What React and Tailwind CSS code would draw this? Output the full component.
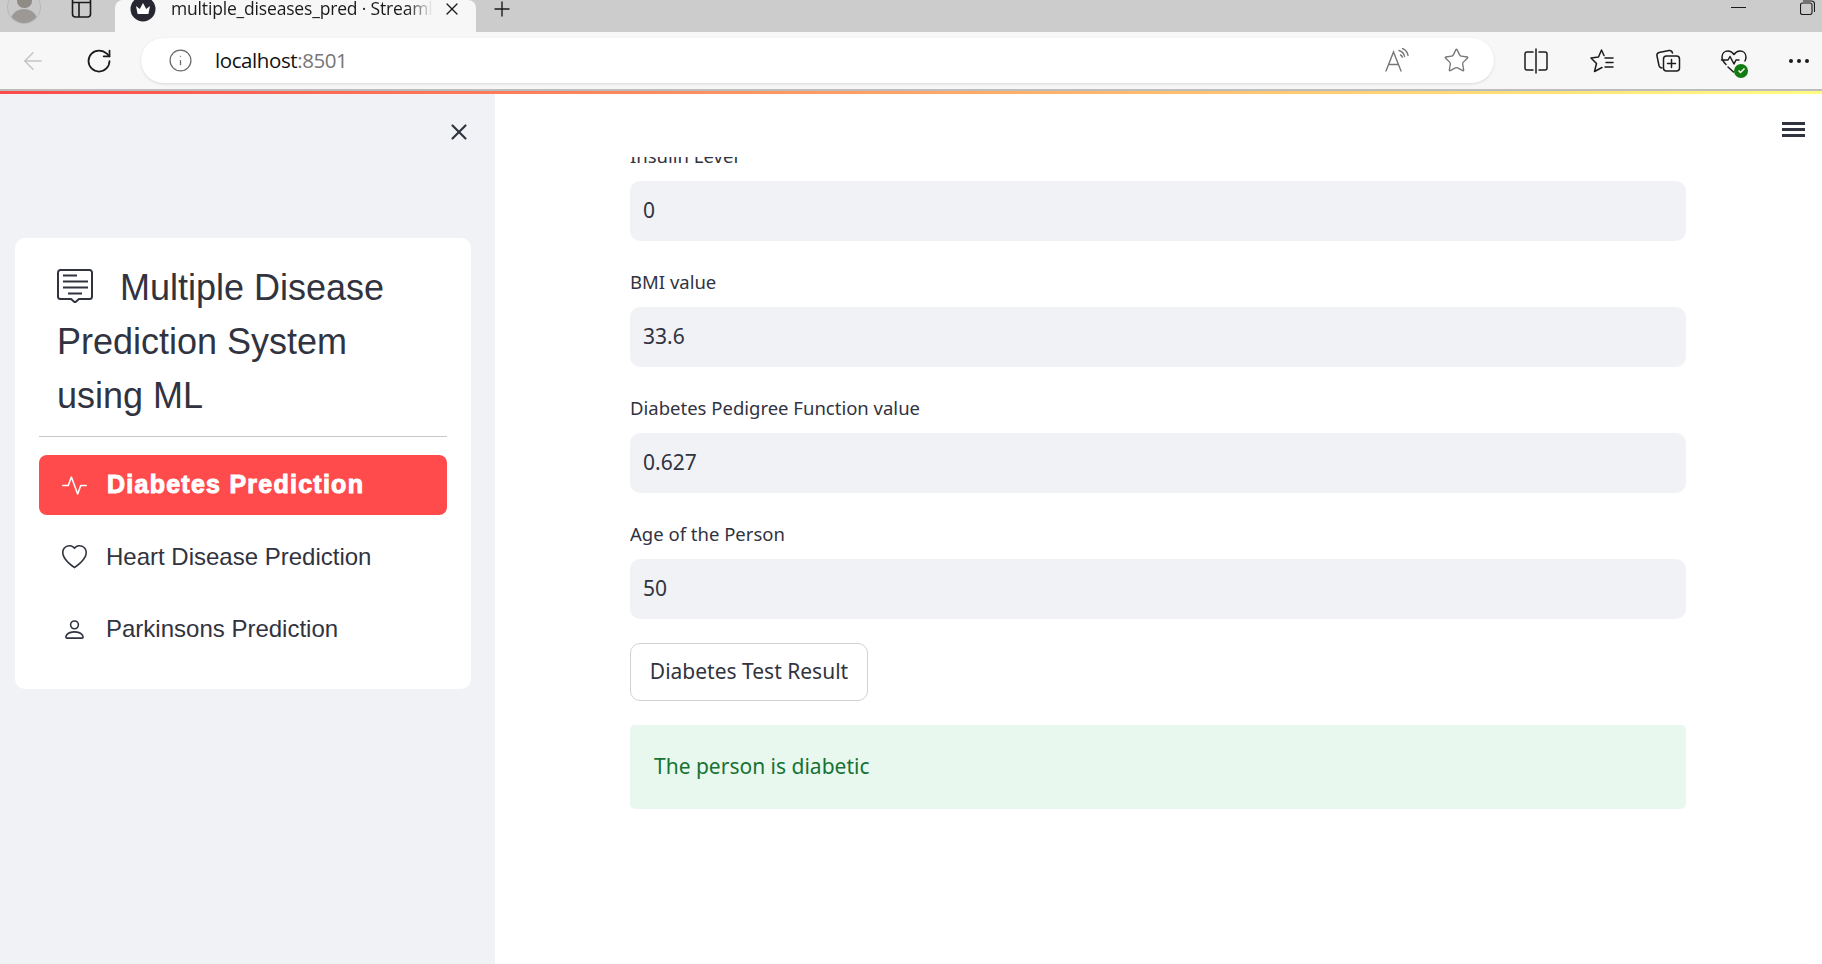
import React from "react";
import { BsActivity, BsHeart, BsPerson } from "react-icons/bs";
import { X, Plus, ArrowLeft, RotateCw, Info, Star } from "lucide-react";

const st = "font-['Noto_Sans','Open_Sans',sans-serif]";

function Field({ label, value, first }) {
  return (
    <div className={first ? "flex flex-col" : "flex flex-col pt-[26px]"}>
      <div className={`${st} h-[40px] whitespace-nowrap text-[18.5px] leading-[30px] text-[#31333f]`}>{label}</div>
      <div className={`${st} flex h-[60px] items-center rounded-[10px] bg-[#f0f2f6] px-[13px] text-[21px] text-[#31333f]`}>{value}</div>
    </div>
  );
}

function ToolIcon({ children }) {
  return <svg width="28" height="28" viewBox="0 0 28 28" fill="none" stroke="#1c1c1c" strokeWidth="1.5" strokeLinecap="round" strokeLinejoin="round">{children}</svg>;
}

function NavItem({ icon, label }) {
  return (
    <div className="flex h-[72px] items-center pl-[23px] text-[24px] text-[#31333f]">
      <span className="flex w-[25px] justify-center">{icon}</span>
      <span className="ml-[19px] font-['Liberation_Sans',sans-serif]">{label}</span>
    </div>
  );
}

export default function App() {
  return (
    <div className="flex h-[964px] w-[1822px] flex-col overflow-hidden bg-white">
      {/* tab strip */}
      <div className="flex h-[32px] shrink-0 items-start bg-[#cccccc]">
        <div className="relative ml-[7px] h-[32px] w-[34px] overflow-hidden">
          <div className="absolute left-0 top-[-10px] flex h-[34px] w-[34px] flex-col items-center overflow-hidden rounded-full border border-[#b8b8b8] bg-[#c9c9c9]">
            <div className="mt-[3px] h-[17px] w-[15px] rounded-full bg-[#8f8c88]" />
            <div className="mt-[1px] h-[18px] w-[28px] rounded-t-full bg-[#9b9895]" />
          </div>
        </div>
        <svg className="ml-[30px] mt-[-3px]" width="22" height="22" viewBox="0 0 22 22" fill="none" stroke="#1a1a1a" strokeWidth="1.6">
          <rect x="1.5" y="1" width="18" height="19" rx="3" />
          <path d="M1.5 5.5h18M8 5.5V20" />
        </svg>
        <div className="ml-[22px] flex h-[32px] w-[361px] items-center rounded-tl-[8px] rounded-tr-[8px] bg-[#f7f7f7] pb-[15px]">
          <svg className="ml-[15px] shrink-0" width="26" height="26" viewBox="0 0 26 26">
            <circle cx="13" cy="13" r="12.5" fill="#262730" />
            <path d="M6 10l3.8 3L13 7l3.2 6L20 10l-1.6 8H7.6z" fill="#fff" />
          </svg>
          <span className="ml-[15px] w-[262px] overflow-hidden whitespace-nowrap font-['Open_Sans',sans-serif] text-[17.5px] tracking-[-0.01em] text-[#1a1a1a] [mask-image:linear-gradient(90deg,#000_90%,transparent)]">multiple_diseases_pred · Streamli</span>
          <X className="ml-[9px] shrink-0" size={20} strokeWidth={1.6} color="#1a1a1a" />
        </div>
        <Plus className="ml-[14px] mt-[-3px]" size={24} strokeWidth={1.4} color="#1a1a1a" />
        <div className="ml-auto mr-[7px] flex items-start">
          <div className="mt-[7px] h-[1px] w-[15px] bg-[#1a1a1a]" />
          <svg className="ml-[54px]" width="15" height="15" viewBox="0 0 15 15" fill="none" stroke="#1a1a1a" strokeWidth="1.1">
            <rect x="0.5" y="3" width="11.5" height="11.5" rx="2" />
            <path d="M3 1h8.5A3 3 0 0 1 14.5 4v8" />
          </svg>
        </div>
      </div>

      {/* toolbar */}
      <div className="flex h-[57px] shrink-0 items-center bg-[#f7f7f7]">
        <ArrowLeft className="ml-[19px]" size={28} strokeWidth={1.2} color="#c4c4c4" />
        <RotateCw className="ml-[38px]" size={28} strokeWidth={1.5} color="#1a1a1a" />
        <div className="ml-[28px] flex h-[45px] w-[1353px] items-center rounded-[23px] bg-white pl-[27px] pr-[24px] shadow-[0_1px_3px_rgba(0,0,0,0.12)]">
          <Info size={25} strokeWidth={1.2} color="#6b6b6b" />
          <span className="ml-[22px] font-['Open_Sans',sans-serif] text-[20.5px] tracking-[-0.02em] text-[#111]">localhost<span className="text-[#767676]">:8501</span></span>
          <div className="ml-auto flex items-center gap-[33px]">
            <svg width="26" height="26" viewBox="0 0 26 26" fill="none" stroke="#777" strokeWidth="1.4" strokeLinecap="round">
              <path d="M2 23L9.5 4l7.5 19M4.8 16.5h9.4" />
              <path d="M15 2.5c3 .8 5 3 5.5 6M16.5 7c1 .4 1.6 1.2 1.8 2.2M18.5 0.5c3 1.2 5 3.500 5.500 7" />
            </svg>
            <Star size={27} strokeWidth={1.2} color="#777" />
          </div>
        </div>
        <div className="ml-[28px] flex items-center gap-[38px]">
          <ToolIcon>
            <path d="M14 2v24M11 5H5a2 2 0 0 0-2 2v14a2 2 0 0 0 2 2h6M17 5h6a2 2 0 0 1 2 2v14a2 2 0 0 1-2 2h-6" />
          </ToolIcon>
          <ToolIcon>
            <path d="M16 8.500L13.500 3 10.500 10 3 11l5.500 5.500-2 8 7.500-4" />
            <path d="M17 11h8M18 15.500h7M17 20h8" />
          </ToolIcon>
          <ToolIcon>
            <path d="M8 21c-1.500 0-2.500-1-3-2.500L3 9c-.5-2 .5-3 2-3.500l10-2c1.500-.3 3 .5 3.500 2.500" />
            <rect x="9.500" y="9" width="16" height="15" rx="3" />
            <path d="M17.500 12.500v8M13.500 16.500h8" />
          </ToolIcon>
          <div className="relative h-[28px] w-[28px]">
            <ToolIcon>
              <path d="M6 17.500C3.500 15 2 13 2 10c0-3.500 2.500-6 6-6 2.500 0 4.500 1.300 6 3.500C15.500 5.300 17.500 4 20 4c3.500 0 6 2.500 6 6 0 1.500-.4 2.800-1 4M1.500 13H8l2-3.500 4 7.500 2-4h3M8 20l5.500 5" />
            </ToolIcon>
            <div className="absolute bottom-[-3px] right-[0px] flex h-[14px] w-[14px] items-center justify-center rounded-full bg-[#107c10]">
              <svg width="9" height="9" viewBox="0 0 9 9" fill="none" stroke="#fff" strokeWidth="1.500"><path d="M1.500 4.500l2 2 4-4" /></svg>
            </div>
          </div>
          <div className="ml-[-1px] flex w-[28px] items-center justify-between px-[4px]">
            <span className="h-[4px] w-[4px] rounded-full bg-[#1a1a1a]" />
            <span className="h-[4px] w-[4px] rounded-full bg-[#1a1a1a]" />
            <span className="h-[4px] w-[4px] rounded-full bg-[#1a1a1a]" />
          </div>
        </div>
      </div>
      <div className="h-[2px] shrink-0 bg-[#bdbdbd]" />
      <div className="h-[3px] shrink-0 bg-[linear-gradient(90deg,#ff4b4b,#fffd80)]" />

      {/* page */}
      <div className="relative flex min-h-0 flex-1">
        <aside className="flex w-[495px] shrink-0 flex-col bg-[#f0f2f6] px-[15px]">
          <div className="flex h-[144px] justify-end pr-[8px] pt-[25px]">
            <X size={26} strokeWidth={2} color="#31333f" />
          </div>
          <div className="w-[456px] rounded-[10px] bg-white px-[24px] pb-[24px] pt-[23px]">
            <div className="pl-[18px] font-['Liberation_Sans',sans-serif] text-[36px] leading-[54px] text-[#31333f]">
              <svg className="mr-[27px] inline-block align-[-3px]" width="36" height="34" viewBox="0 0 36 34" fill="none" stroke="#31333f" strokeWidth="2">
                <path d="M3.500 1h29A2.500 2.500 0 0 1 35 3.500v24a2.500 2.500 0 0 1-2.500 2.500H22l-4 3.500-4-3.500H3.500A2.500 2.500 0 0 1 1 27.500v-24A2.500 2.500 0 0 1 3.500 1z" />
                <path strokeWidth="2.200" d="M6 6.500h14M6 12.500h25M6 18.500h25M11 24.500h14" />
              </svg>
              Multiple Disease<br />Prediction System<br />using ML
            </div>
            <div className="mt-[13px] h-px bg-[#c8c8c8]" />
            <div className="mt-[18px] flex h-[60px] items-center rounded-[8px] bg-[#ff4b4b] pl-[23px] text-white">
              <span className="flex w-[25px] justify-center"><BsActivity size={25} /></span>
              <span className="ml-[20px] whitespace-nowrap font-['Liberation_Sans',sans-serif] text-[25px] font-bold tracking-[0.05em] [-webkit-text-stroke:1px_white]">Diabetes Prediction</span>
            </div>
            <div className="mt-[6px]">
              <NavItem icon={<BsHeart size={25} />} label="Heart Disease Prediction" />
              <NavItem icon={<BsPerson size={25} />} label="Parkinsons Prediction" />
            </div>
          </div>
        </aside>

        <main className="relative min-w-0 flex-1">
          <button className="absolute right-[17px] top-[28px] flex flex-col gap-[3px]" aria-label="menu">
            <span className="h-[3px] w-[23px] bg-[#31333f]" />
            <span className="h-[3px] w-[23px] bg-[#31333f]" />
            <span className="h-[3px] w-[23px] bg-[#31333f]" />
          </button>
          <div className="ml-[135px] mt-[63px] w-[1056px] overflow-hidden">
            <div className="mt-[-16px]">
              <Field first label="Insulin Level" value="0" />
              <Field label="BMI value" value="33.6" />
              <Field label="Diabetes Pedigree Function value" value="0.627" />
              <Field label="Age of the Person" value="50" />
              <div className={`${st} mt-[24px] flex h-[58px] w-[238px] items-center justify-center rounded-[10px] border border-[#d2d2d6] text-[21px] text-[#31333f]`}>Diabetes Test Result</div>
              <div className={`${st} mt-[24px] flex h-[84px] items-center rounded-[5px] bg-[#e8f8ee] px-[24px] text-[21px] text-[#177233]`}>The person is diabetic</div>
            </div>
          </div>
        </main>
      </div>
    </div>
  );
}
